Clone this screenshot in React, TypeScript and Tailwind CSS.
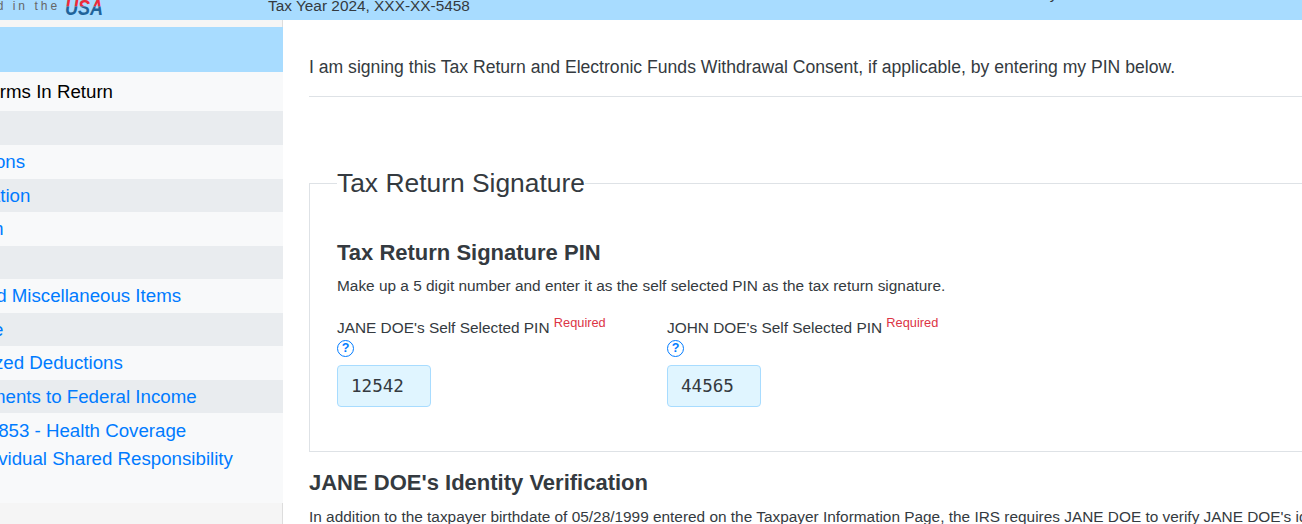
import * as React from "react"

const sans = "font-['Liberation_Sans',Arial,sans-serif]"

const navRows = [
  { label: "Forms In Return", h: "h-[39px] pt-[2px]", bg: "bg-[#f8f9fa]", ml: "ml-[-22px]", active: true },
  { label: "", h: "h-[34px]", bg: "bg-[#e9ecef]", ml: "" },
  { label: "Contributions", h: "h-[34px]", bg: "bg-[#f8f9fa]", ml: "ml-[-85px]" },
  { label: "Filing Information", h: "h-[33px] pt-[1px]", bg: "bg-[#e9ecef]", ml: "ml-[-113px]" },
  { label: "Form", h: "h-[34px]", bg: "bg-[#f8f9fa]", ml: "ml-[-40px]" },
  { label: "", h: "h-[33px]", bg: "bg-[#e9ecef]", ml: "" },
  { label: "Credits and Miscellaneous Items", h: "h-[34px]", bg: "bg-[#f8f9fa]", ml: "ml-[-89px]" },
  { label: "Income", h: "h-[33px] pt-[1px]", bg: "bg-[#e9ecef]", ml: "ml-[-58px]" },
  { label: "Itemized Deductions", h: "h-[34px]", bg: "bg-[#f8f9fa]", ml: "ml-[-46.5px]" },
  { label: "Adjustments to Federal Income", h: "h-[33px] pt-[1px]", bg: "bg-[#e9ecef]", ml: "ml-[-62px]" },
]

function HelpIcon() {
  return (
    <span className="flex h-[17px] w-[17px] items-center justify-center rounded-full border border-[#007bff] text-[12.5px] font-bold leading-none text-[#007bff]">
      ?
    </span>
  )
}

function PinField({ name, value, width }: { name: string; value: string; width: string }) {
  return (
    <div className={width}>
      <div className="text-[15.4px] leading-[23px] text-[#343a40]">
        {name}'s Self Selected PIN{" "}
        <sup className="text-[12.8px] text-[#dc3545]">Required</sup>
      </div>
      <div className="mt-[1px] h-[24px]">
        <HelpIcon />
      </div>
      <div className="mt-[1px] flex h-[42px] w-[94px] items-center rounded border border-[#a8dcff] bg-[#e0f5ff] px-[13px] font-['DejaVu_Sans_Mono',monospace] text-[17.6px] text-[#343a40]">
        {value}
      </div>
    </div>
  )
}

export default function App() {
  return (
    <div className={`${sans} flex h-[524px] w-[1302px] flex-col overflow-hidden bg-white`}>
      <header className="flex h-5 shrink-0 items-end overflow-hidden bg-[#a8dcff]">
        <div className="flex w-[268px] shrink-0 items-start overflow-hidden">
          <span className="ml-[-62px] whitespace-nowrap text-[12px] leading-[13px] tracking-[3px] text-[#666]">Founded in the</span>
          <svg width="42" height="20" viewBox="0 0 42 20" className="ml-[5px] shrink-0">
            <defs>
              <clipPath id="topHalf"><rect x="0" y="0" width="42" height="6.5" /></clipPath>
              <clipPath id="bottomHalf"><rect x="0" y="6.5" width="42" height="13.5" /></clipPath>
            </defs>
            <text x="0" y="14.5" fontFamily="Liberation Sans" fontWeight="700" fontStyle="italic" fontSize="22" textLength="38" lengthAdjust="spacingAndGlyphs" fill="#ee2b3b" clipPath="url(#topHalf)">USA</text>
            <text x="0" y="14.5" fontFamily="Liberation Sans" fontWeight="700" fontStyle="italic" fontSize="22" textLength="38" lengthAdjust="spacingAndGlyphs" fill="#1f639b" clipPath="url(#bottomHalf)">USA</text>
          </svg>
        </div>
        <span className="mb-[7px] whitespace-nowrap text-[15.4px] leading-none text-[#343a40]">Tax Year 2024, XXX-XX-5458</span>
        <span className="mb-[19px] ml-[537px] whitespace-nowrap text-[15.4px] leading-none text-[#343a40]">Privacy</span>
      </header>

      <div className="flex min-h-0 flex-1">
        <aside className="flex w-[283px] shrink-0 flex-col overflow-hidden bg-[#f5f5f5]">
          <div className="h-[7px] shrink-0 border-r border-[#dddddd]" />
          <div className="h-[45px] shrink-0 bg-[#a8dcff]" />
          {navRows.map((row, i) => (
            <div key={i} className={`${row.h} ${row.bg} flex shrink-0 items-center overflow-hidden`}>
              <span className={`${row.ml} whitespace-nowrap text-[18.7px] ${row.active ? "text-black" : "text-[#007bff]"}`}>
                {row.label}
              </span>
            </div>
          ))}
          <div className="h-[90px] shrink-0 overflow-hidden bg-[#f8f9fa] pt-[4px] text-[18.7px] leading-[28px] text-[#007bff]">
            <div className="ml-[-61px] whitespace-nowrap">Form 8853 - Health Coverage</div>
            <div className="ml-[-32px] whitespace-nowrap">Individual Shared Responsibility</div>
          </div>
          <div className="flex-1 border-r border-[#dddddd]" />
        </aside>

        <main className="min-w-0 flex-1 overflow-hidden pl-[26px] text-[#343a40]">
          <p className="mt-[36px] whitespace-nowrap text-[17.6px] leading-[22px]">
            I am signing this Tax Return and Electronic Funds Withdrawal Consent, if applicable, by entering my PIN below.
          </p>
          <div className="mt-[18px] border-t border-[#dee2e6]" />

          <fieldset className="mt-[70px] mr-[-20px] h-[285px] border border-[#dee2e6] px-[27px]">
            <legend className="text-[26.4px] leading-[32px]">Tax Return Signature</legend>
            <h3 className="mt-[41px] text-[22px] font-bold leading-[26px]">Tax Return Signature PIN</h3>
            <p className="mt-[8px] whitespace-nowrap text-[15.4px] leading-[23px]">
              Make up a 5 digit number and enter it as the self selected PIN as the tax return signature.
            </p>
            <div className="mt-[19px] flex">
              <PinField name="JANE DOE" value="12542" width="w-[330px]" />
              <PinField name="JOHN DOE" value="44565" width="w-[330px]" />
            </div>
          </fieldset>

          <h3 className="mt-[18px] text-[22px] font-bold leading-[26px]">JANE DOE's Identity Verification</h3>
          <p className="mt-[9px] whitespace-nowrap text-[15.4px] leading-[23px]">
            In addition to the taxpayer birthdate of 05/28/1999 entered on the Taxpayer Information Page, the IRS requires JANE DOE to verify JANE DOE's identity
          </p>
        </main>
      </div>
    </div>
  )
}
